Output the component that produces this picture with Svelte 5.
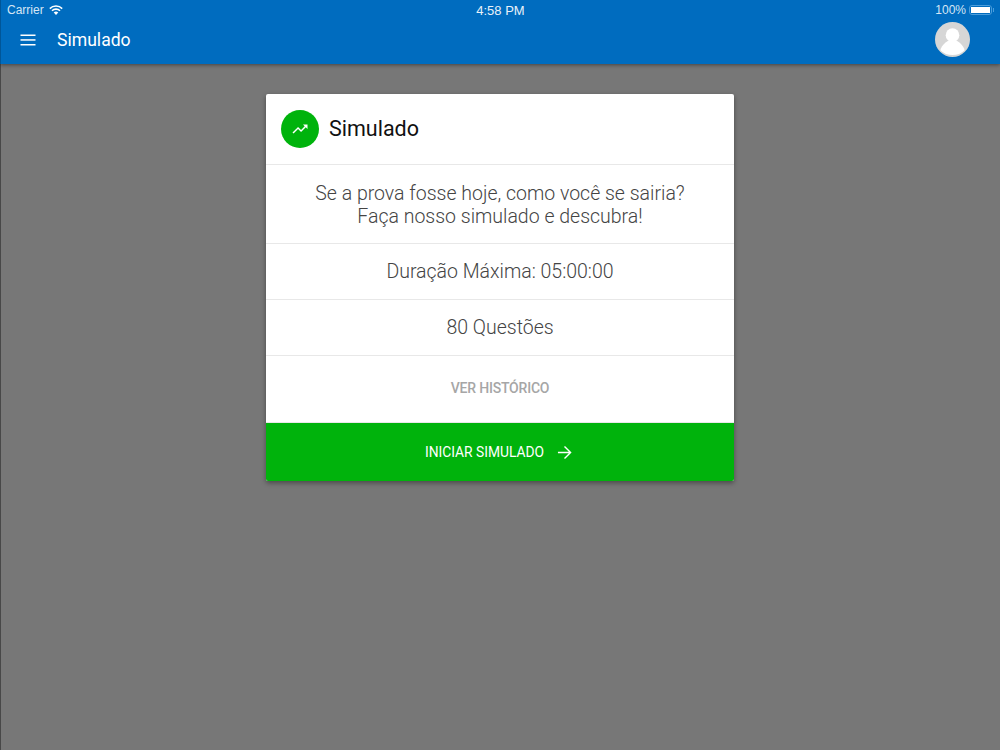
<script>
	const rows = ['Duração Máxima: 05:00:00', '80 Questões'];
</script>

<div class="page">
	<header>
		<div class="status">
			<div class="carrier">
				<span>Carrier</span>
				<svg width="14" height="10" viewBox="0 0 14 10" fill="none" stroke="#fff" stroke-width="1.6">
					<path d="M0.8 3.6 A8.8 8.8 0 0 1 13.2 3.6" />
					<path d="M3 5.8 A5.6 5.6 0 0 1 11 5.8" />
					<path d="M7 10 L4.7 7.5 A3.3 3.3 0 0 1 9.3 7.5 Z" fill="#fff" stroke="none" />
				</svg>
			</div>
			<div class="time">4:58 PM</div>
			<div class="battery">
				<span>100%</span>
				<div class="cell"><div class="charge"></div></div>
				<div class="nub"></div>
			</div>
		</div>
		<div class="toolbar">
			<svg class="menu" width="16" height="12" viewBox="0 0 16 12" fill="#fff">
				<rect x="0.5" y="0.5" width="15" height="1.5" />
				<rect x="0.5" y="5.2" width="15" height="1.5" />
				<rect x="0.5" y="10" width="15" height="1.5" />
			</svg>
			<h1>Simulado</h1>
			<div class="avatar">
				<svg width="35" height="35" viewBox="0 0 36 36">
					<circle cx="18" cy="18" r="18" fill="#d6d6d6" />
					<circle cx="18" cy="13.5" r="7" fill="#fff" />
					<path d="M5.5 29 C7 23.5 12 20 14 19 L22 19 C24 20 29 23.5 30.5 29 A18 18 0 0 1 5.5 29 Z" fill="#fff" />
				</svg>
			</div>
		</div>
	</header>

	<main>
		<section class="card">
			<div class="head">
				<div class="badge">
					<svg width="18" height="18" viewBox="0 0 24 24" fill="#fff">
						<path d="M16 6l2.29 2.29-4.88 4.88-4-4L2 16.59 3.41 18l6-6 4 4 6.3-6.29L22 12V6z" />
					</svg>
				</div>
				<h2>Simulado</h2>
			</div>
			<div class="row intro">
				Se a prova fosse hoje, como você se sairia?<br />
				Faça nosso simulado e descubra!
			</div>
			{#each rows as row}
				<div class="row info">{row}</div>
			{/each}
			<div class="row history">VER HISTÓRICO</div>
			<div class="start">
				<span>INICIAR SIMULADO</span>
				<svg width="15" height="15" viewBox="0 0 16 16" fill="none" stroke="#fff" stroke-width="1.5">
					<path d="M1 8h13.4M8 1.5 14.5 8 8 14.5" />
				</svg>
			</div>
		</section>
	</main>
</div>

<style>
	:global(body) {
		margin: 0;
	}
	.page {
		width: 1000px;
		height: 750px;
		display: flex;
		flex-direction: column;
		background: #777777;
		box-shadow: inset 1px 0 #484848;
		font-family: Roboto, sans-serif;
		overflow: hidden;
	}
	header {
		height: 64px;
		flex-shrink: 0;
		background: #006cbf;
		color: #fff;
		box-shadow: 0 1px 4px rgba(0, 0, 0, 0.45), inset 1px 0 rgba(0, 0, 0, 0.2);
		position: relative;
	}
	.status {
		height: 20px;
		padding: 0 6px 0 7px;
		display: grid;
		grid-template-columns: 1fr auto 1fr;
		align-items: center;
		font-family: 'Liberation Sans', sans-serif;
		font-size: 12px;
		color: #d5e6f5;
	}
	.carrier {
		display: flex;
		align-items: center;
		gap: 5px;
	}
	.time {
		color: #e8f1f9;
		font-size: 13px;
	}
	.battery {
		display: flex;
		align-items: center;
		justify-content: flex-end;
		gap: 2px;
	}
	.cell {
		width: 19px;
		height: 6px;
		border: 1px solid #4b9ddb;
		border-radius: 3px;
		padding: 1px;
		margin-left: 1px;
	}
	.charge {
		width: 100%;
		height: 100%;
		background: #fff;
	}
	.nub {
		width: 1px;
		height: 4px;
		background: #4b9ddb;
		margin-left: -1px;
	}
	.toolbar {
		height: 39px;
		display: flex;
		align-items: center;
		padding: 0 30px 0 20px;
	}
	.menu {
		margin-right: 21px;
	}
	h1 {
		margin: 0;
		font-size: 17.6px;
		font-weight: 400;
		flex: 1;
	}
	.avatar {
		width: 35px;
		height: 35px;
	}
	main {
		flex: 1;
		display: flex;
		justify-content: center;
		align-items: flex-start;
		padding-top: 30px;
	}
	.card {
		width: 468px;
		background: #fff;
		border-radius: 2px;
		overflow: hidden;
		box-shadow: 0 2px 5px rgba(0, 0, 0, 0.4);
	}
	.head {
		height: 70px;
		display: flex;
		align-items: center;
		gap: 10px;
		padding: 0 15px;
		border-bottom: 1px solid #e8e8e8;
	}
	.badge {
		width: 38px;
		height: 38px;
		border-radius: 50%;
		background: #00b30c;
		display: flex;
		align-items: center;
		justify-content: center;
	}
	h2 {
		margin: 0 0 2px;
		font-size: 21.5px;
		font-weight: 400;
		color: #111;
	}
	.row {
		display: flex;
		align-items: center;
		justify-content: center;
		text-align: center;
		font-size: 19.5px;
		font-weight: 300;
		color: #444;
		border-bottom: 1px solid #e8e8e8;
	}
	.intro {
		display: block;
		box-sizing: border-box;
		height: 79px;
		line-height: 23px;
		padding-top: 17px;
	}
	.info {
		height: 55px;
	}
	.history {
		height: 64px;
		padding-bottom: 2px;
		font-size: 14px;
		letter-spacing: -0.2px;
		font-weight: 500;
		color: #a6a6a6;
	}
	.start {
		height: 58px;
		padding-right: 3px;
		background: #00b30c;
		color: #fff;
		display: flex;
		align-items: center;
		justify-content: center;
		gap: 13px;
		font-size: 13.8px;
		font-weight: 400;
	}
</style>
